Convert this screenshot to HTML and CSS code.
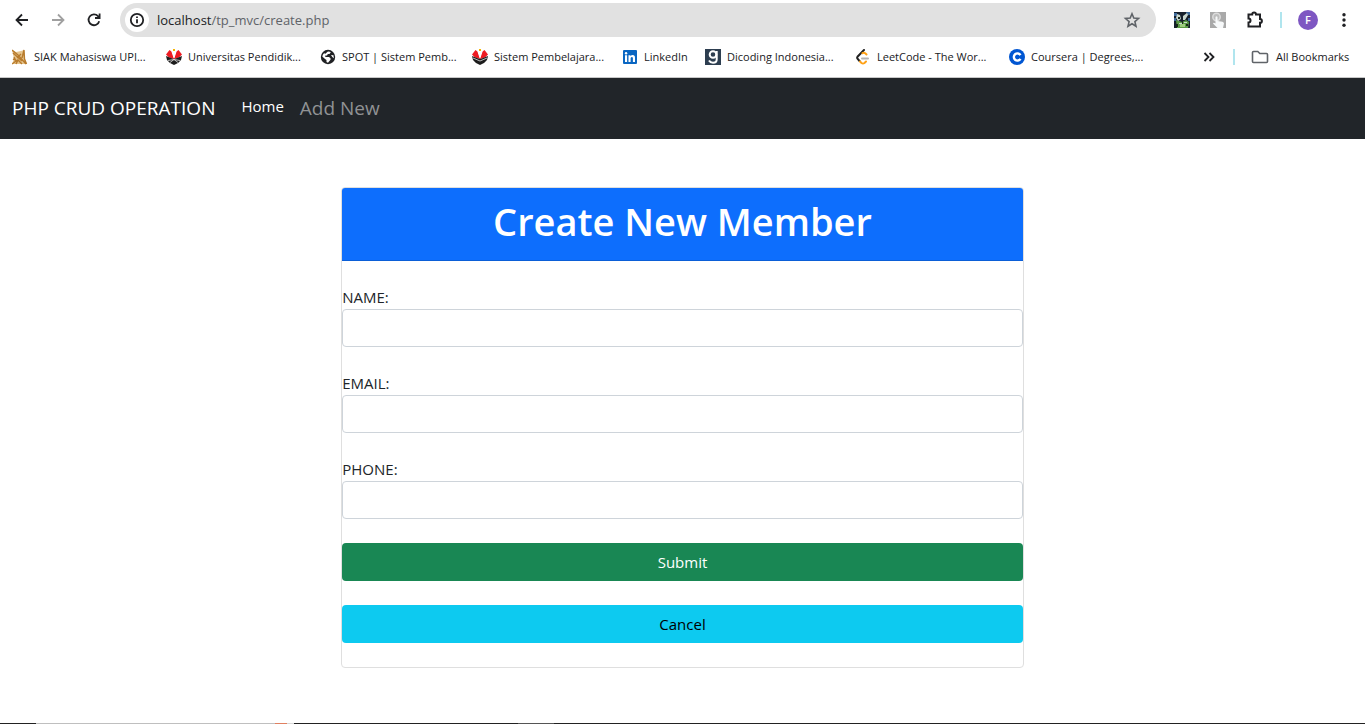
FILE: index.html
```html
<!DOCTYPE html>
<html lang="en">
<head>
<meta charset="utf-8">
<title>PHP CRUD Operation</title>
<link rel="stylesheet" href="styles.css">
</head>
<body>
<div class="toolbar">
  <button class="tool" aria-label="Back"><svg width="16" height="16" viewBox="0 0 16 16" class="line dark"><path d="M14 8H3M8 2.5 2.5 8 8 13.5"/></svg></button>
  <button class="tool" aria-label="Forward"><svg width="16" height="16" viewBox="0 0 16 16" class="line pale"><path d="M2 8h11M8 2.5 13.5 8 8 13.5"/></svg></button>
  <button class="tool" aria-label="Reload"><svg width="16" height="16" viewBox="0 0 16 16" class="line dark"><path d="M13.2 9.2A5.4 5.4 0 1 1 12 4.2l1.3 1.4"/><path d="M13.6 1.5V6H9"/></svg></button>
  <div class="address">
    <button class="info" aria-label="Site information"><svg width="16" height="16" viewBox="0 0 16 16" class="line dark"><circle cx="8" cy="8" r="6.2"/><path d="M8 7.2v4M8 4.4v1.6"/></svg></button>
    <div class="url"><span class="host">localhost</span>/tp_mvc/create.php</div>
    <button class="star" aria-label="Bookmark this page"><svg width="18" height="18" viewBox="0 0 18 18" class="line grey"><path d="M9 2.800l1.800 4.300 4.700.4-3.600 3.100 1.100 4.600L9 12.700l-4 2.500 1.100-4.600-3.600-3.100 4.700-.4z"/></svg></button>
  </div>
  <div class="extensions">
    <button class="tool" aria-label="Extension"><svg width="16" height="16" viewBox="0 0 16 16"><path fill="#16202c" d="M0 0h16v16H0z"/><path fill="#5b9a45" d="M2 8l3 1 3 1 4-2 3 2-1 6H3z"/><path fill="#3d6a9a" d="M0 1h3v3H0zM12 0h4v3h-3zM0 6h2v3H0zM14 6h2v3h-2z"/><path fill="#c9d7cf" d="M3 2l3 1 1 4-3 2-2-3zM9 4l4-3 1 2-3 5-2 0zM5 11h3v1H5zM10 10h3v1h-3z"/><path fill="#182818" d="M4 5h2v2H4zM2 12h2v3H2zM8 9h1v3H8zM12 12h2v2h-2z"/><path fill="#9ccc7c" d="M6 12h5v3H6z"/></svg></button>
    <button class="tool" aria-label="Auto clicker"><svg width="16" height="16" viewBox="0 0 16 16"><path fill="#a9a9a9" d="M0 0h16v16H0z"/><circle cx="6.500" cy="5" r="3.700" fill="#bdbdbd" stroke="#dcdcdc" stroke-width="1.500"/><path fill="#f7f9fa" d="M5.500 5q1-1.500 2 0v4l5 .8q1.500.4 1.500 1.700L13 16H7.500L3 11.500q.5-1.300 2.500 0z"/></svg></button>
    <button class="tool" aria-label="Extensions"><svg width="18" height="18" viewBox="0 0 18 18" class="line dark bold"><path d="M2.500 3.500h3.700a1.900 1.900 0 0 1 3.800 0h4v4.500a1.900 1.900 0 0 1 0 3.800V15.500H2.500v-4a2 2 0 0 0 0-4z"/></svg></button>
  </div>
  <span class="divider"></span>
  <button class="avatar" aria-label="Profile">F</button>
  <button class="tool" aria-label="Menu"><svg width="16" height="16" viewBox="0 0 16 16" fill="#202124"><circle cx="8" cy="2.8" r="1.7"/><circle cx="8" cy="8" r="1.7"/><circle cx="8" cy="13.2" r="1.7"/></svg></button>
</div>

<nav class="bookmarks" aria-label="Bookmarks">
  <a href="#"><svg width="16" height="16" viewBox="0 0 16 16"><path fill="#e6c58e" d="M0 1l4 2 5-1 3-1 1 9 2 5H0l2-5z"/><path fill="none" stroke="#b87b2c" stroke-width="1.400" d="M0 1l6 5 8 9M1 4l9 8M5 9l4-4M10 9l2-8 .5 9 2 5M0 15l4-3-2-4M4 15l2-4 4 4M1 10l5 2"/></svg><span class="wide">SIAK Mahasiswa UPI...</span></a>
  <a href="#"><svg width="16" height="16" viewBox="0 0 16 16"><path fill="#ee1c23" d="M0 5.500L3.500 1l2 1.500L8 8l2.500-5.500 2-1.500L16 5.500 13 8.500 8 10 3 8.500z"/><path fill="#fff" d="M5.500 2.500L7 1.500 8 7l1-5.500 1.500 1L8.500 9h-1z"/><path fill="#f5b400" d="M7 0h2v2H7z"/><path fill="#1c1c1c" d="M0 7l5 2 3 1 3-1 5-2-1 4-3 3-4 2-4-2-3-3z"/><path stroke="#fff" stroke-width=".7" fill="none" d="M2 11.500l6-1 6 1M4 13.500l4-3 4 3"/></svg><span class="wide">Universitas Pendidik...</span></a>
  <a href="#"><svg width="16" height="16" viewBox="0 0 16 16"><circle cx="8" cy="8" r="7.200" fill="#202124"/><path fill="#fff" d="M7.500 2.700q2-.4 3.300.6L9.500 5H7.800L7 6.500H5.300V8H9l1.500 1.200v1.500L9 12.500 8 13.800 6.500 13v-2L5 10 2.300 7.500q.3-2 1.700-3.300l1.500.6zM11 6l2.500.2.300 3L12.300 8z"/></svg><span class="mid">SPOT | Sistem Pemb...</span></a>
  <a href="#"><svg width="16" height="16" viewBox="0 0 16 16"><path fill="#ee1c23" d="M0 5.500L3.500 1l2 1.500L8 8l2.500-5.500 2-1.500L16 5.500 13 8.500 8 10 3 8.500z"/><path fill="#fff" d="M5.500 2.500L7 1.500 8 7l1-5.500 1.500 1L8.500 9h-1z"/><path fill="#f5b400" d="M7 0h2v2H7z"/><path fill="#1c1c1c" d="M0 7l5 2 3 1 3-1 5-2-1 4-3 3-4 2-4-2-3-3z"/><path stroke="#fff" stroke-width=".7" fill="none" d="M1 9l7 3 7-3"/></svg><span class="narrow">Sistem Pembelajara...</span></a>
  <a href="#"><svg width="16" height="16" viewBox="0 0 16 16"><rect x="1" y="1" width="14" height="14" rx="1" fill="#0a66c2"/><path fill="#fff" d="M3 6.300h2.100V13H3zM6.500 6.300h2v1q.8-1.200 2.200-1.200 2.300 0 2.300 2.700V13h-2.100V9.300q0-1.400-1.100-1.400-1.200 0-1.200 1.500V13H6.500z"/><circle cx="4.050" cy="4.200" r="1.200" fill="#fff"/></svg><span class="short">LinkedIn</span></a>
  <a href="#"><svg width="16" height="16" viewBox="0 0 16 16"><path fill="#2d3e50" d="M0 0h16v16H0z"/><g fill="none" stroke="#fff" stroke-width="2"><circle cx="8" cy="5.500" r="3.300"/><path d="M11.700 2v8.500q0 3.200-3.700 3.200-2.700 0-4-2.200"/></g></svg><span class="narrow">Dicoding Indonesia...</span></a>
  <a href="#"><svg width="16" height="16" viewBox="0 0 16 16" fill="none" stroke-width="2" stroke-linecap="round"><path stroke="#222" d="M9 1L2.500 7.700q-.7 1 0 2L4.500 12"/><path stroke="#ffa116" d="M5 12.500l1.500 1.500q1.500 1 3 0l1.500-1.500M7.500 4.200q1.500-1 3 .3l1 1"/><path stroke="#b3b3b3" d="M7 9.500h6"/></svg><span class="wide">LeetCode - The Wor...</span></a>
  <a href="#"><svg width="16" height="16" viewBox="0 0 16 16"><circle cx="8" cy="8" r="8" fill="#0056d2"/><path fill="none" stroke="#fff" stroke-width="2.400" d="M11.500 9.900A3.600 3.600 0 1 1 11.500 6.100"/></svg><span class="narrow">Coursera | Degrees,...</span></a>
  <button class="tool more" aria-label="More bookmarks"><svg width="16" height="16" viewBox="0 0 16 16" class="line dark"><path d="M3.500 4l4 4-4 4M8.500 4l4 4-4 4"/></svg></button>
  <span class="divider"></span>
  <a href="#" class="all"><svg width="18" height="16" viewBox="0 0 18 16" class="line grey"><path d="M2.500 2.500h4.300l2 2h6.700q1 0 1 1v7q0 1-1 1h-13q-1 0-1-1v-9q0-1 1-1z"/></svg><span class="label">All Bookmarks</span></a>
</nav>

<header class="navbar">
  <a class="brand" href="#">PHP CRUD OPERATION</a>
  <a class="link active" href="#">Home</a>
  <a class="link add" href="#">Add New</a>
</header>

<main class="content">
  <form class="card">
    <div class="card-header"><h1>Create New Member</h1></div>
    <div class="fields">
      <div class="field"><label for="name">NAME:</label><input type="text" id="name"></div>
      <div class="field"><label for="email">EMAIL:</label><input type="text" id="email"></div>
      <div class="field"><label for="phone">PHONE:</label><input type="text" id="phone"></div>
      <button class="btn submit" type="submit">Submit</button>
      <a class="btn cancel" href="#">Cancel</a>
    </div>
  </form>
</main>
<div class="taskbar"></div>
</body>
</html>
```
FILE: styles.css
```css
* { box-sizing: border-box; }
body {
  margin: 0;
  min-height: 100vh;
  display: flex;
  flex-direction: column;
  background: #fff;
  color: #212529;
  font: 15px/24px "Segoe UI", "Open Sans", sans-serif;
}
a { color: inherit; text-decoration: none; }
button { border: 0; padding: 0; background: none; font: inherit; color: inherit; }
svg { display: block; flex: none; }

.line { fill: none; stroke-width: 1.8; }
.dark { stroke: #202124; }
.bold { stroke-width: 2; }
.grey { stroke: #5f6368; stroke-width: 1.6; }
.pale { stroke: #a0a0a0; }

/* Browser toolbar */
.toolbar {
  display: flex;
  align-items: center;
  gap: 20px;
  height: 40px;
  padding: 0 13px 0 14px;
}
.address {
  flex: 1;
  display: flex;
  align-items: center;
  gap: 8px;
  height: 34px;
  margin-left: -2px;
  padding: 0 15px 0 5px;
  border-radius: 17px;
  background: #e1e1e1;
}
.info {
  display: grid;
  place-items: center;
  width: 24px;
  height: 24px;
  border-radius: 50%;
  background: #fff;
}
.url { flex: 1; font-size: 13px; color: #5f6368; }
.host { color: #202124; }
.extensions { display: flex; align-items: center; gap: 20px; margin: 0 -4px 0 -2px; }
.divider { flex: none; width: 2px; height: 16px; background: #b0e5ee; }
.toolbar .divider { margin-right: -4px; }
.avatar {
  width: 20px;
  height: 20px;
  margin-right: -2px;
  border-radius: 50%;
  background: #7e57c2;
  color: #fff;
  font-size: 11px;
  font-weight: 600;
  line-height: 20px;
}

/* Bookmarks bar */
.bookmarks {
  display: flex;
  align-items: center;
  gap: 16px;
  height: 38px;
  padding: 0 13px 4px 12px;
  border-bottom: 1px solid #c8c8c8;
  color: #202124;
  font-size: 11px;
  white-space: nowrap;
}
.bookmarks a { display: flex; align-items: center; gap: 6px; }
.wide { width: 116px; }
.mid { width: 114px; }
.narrow { width: 112px; }
.short { width: 45px; }
.label { width: 76px; }
.more { margin-left: auto; }
.bookmarks .all { gap: 7px; }

/* Site navigation */
.navbar {
  display: flex;
  align-items: flex-start;
  padding: 8px 12px;
  background: #212529;
  color: #fff;
}
.brand { margin-right: 18px; padding: 8px 0; font-size: 19px; line-height: 29px; }
.link { padding: 8px; }
.add { font-size: 19px; line-height: 29px; color: #909294; }

/* Member form */
.content { flex: 1; padding: 48px 0; }
.card {
  width: 50%;
  margin: 0 auto;
  border: 1px solid #dfdfdf;
  border-radius: 4px;
}
.card-header {
  padding: 9px 16px 15px;
  border-bottom: 1px solid #0b5ed7;
  border-radius: 3px 3px 0 0;
  background: #0d6efd;
  color: #fff;
  text-align: center;
}
h1 { margin: 0; font-size: 38px; line-height: 48px; font-weight: 600; }
.fields { display: flex; flex-direction: column; gap: 24px; padding: 24px 0; }
.field { display: flex; flex-direction: column; }
input {
  height: 38px;
  padding: 6px 12px;
  border: 1px solid #ced4da;
  border-radius: 4px;
  font: inherit;
}
.btn { padding: 7px 12px; border-radius: 4px; text-align: center; line-height: 24px; }
.submit { background: #198754; color: #fff; }
.cancel { background: #0dcaf0; color: #000; }

.taskbar {
  height: 1px;
  background: linear-gradient(90deg, #222 36px, #bfbfbf 36px 275px, #e08060 275px 287px, #d8d8d8 287px 294px, #222 294px 518px, #555 518px 554px, #222 554px);
}
```
